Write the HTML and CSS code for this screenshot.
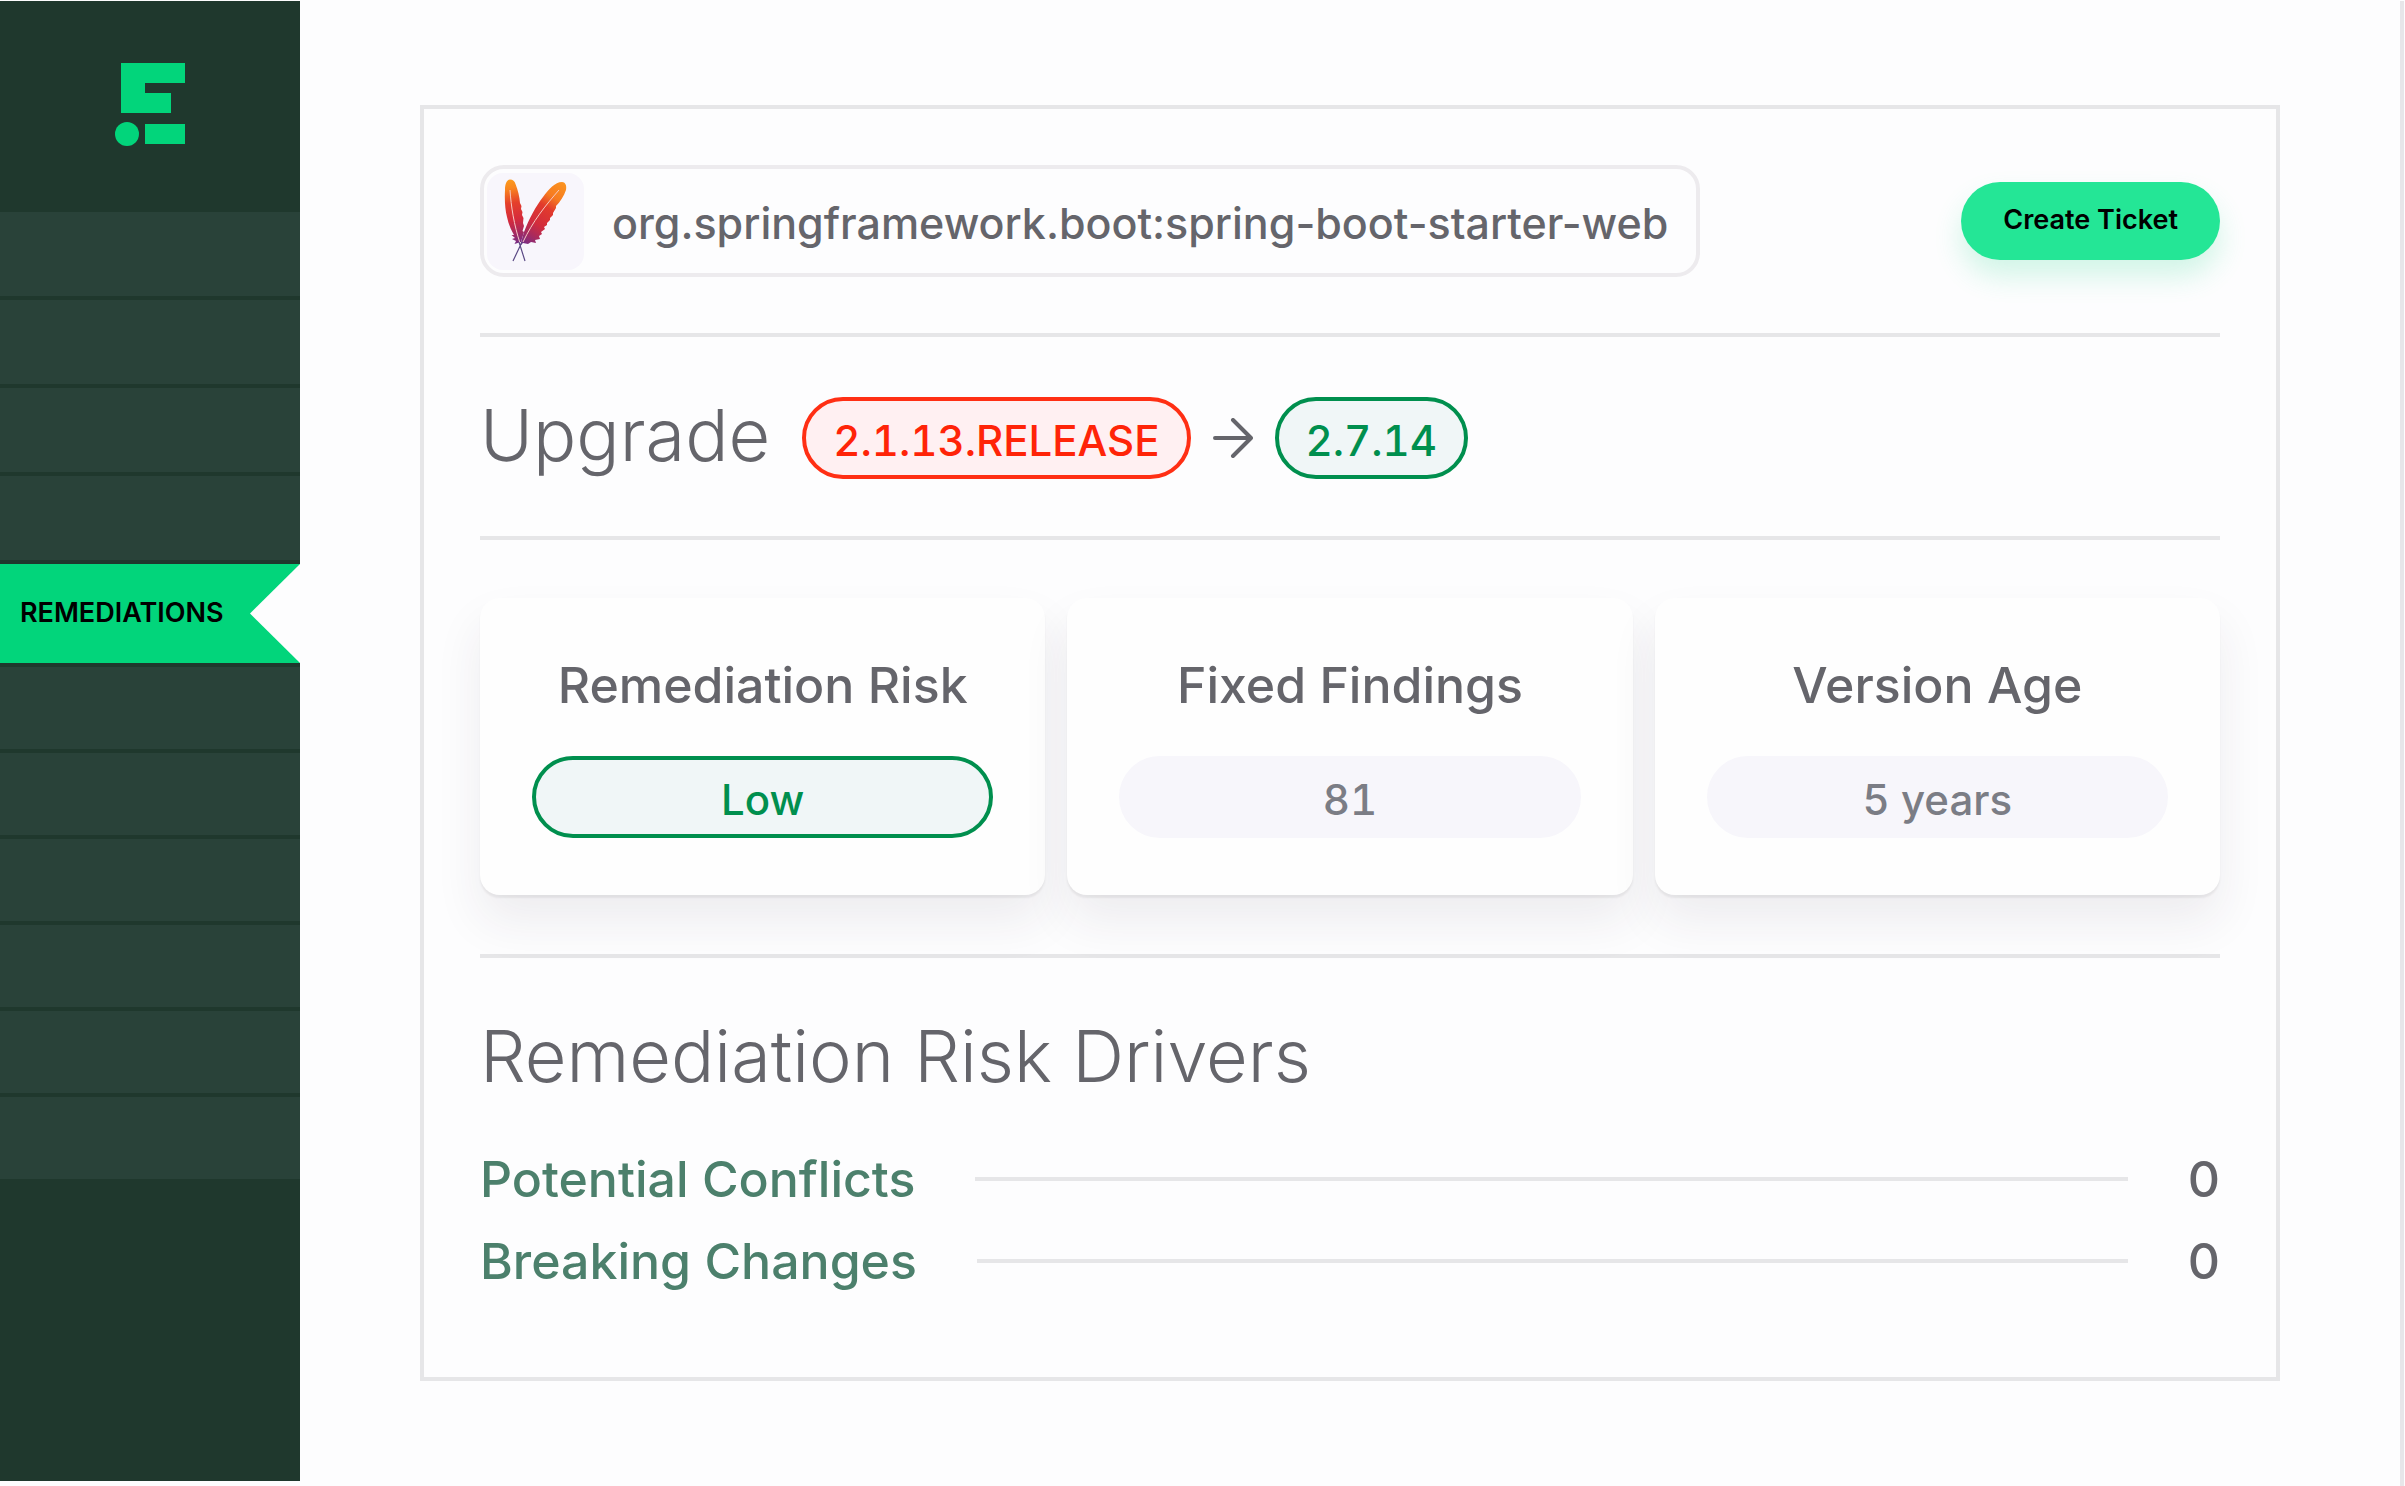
FILE: index.html
```html
<!DOCTYPE html>
<html lang="en">
<head>
  <meta charset="UTF-8">
  <title>Remediations</title>
  <link rel="stylesheet" href="styles.css">
</head>
<body>
  <aside class="sidebar">
    <svg class="logo" viewBox="0 0 70 84" aria-hidden="true">
      <path d="M6 0H70V20H30V30H56V50H6Z"/>
      <circle cx="12" cy="71" r="12"/>
      <path d="M30 61H70V81H30Z"/>
    </svg>
    <ul class="menu">
      <li></li>
      <li></li>
      <li></li>
      <li></li>
      <li class="active"><a href="#">REMEDIATIONS</a></li>
      <li></li>
      <li></li>
      <li></li>
      <li></li>
      <li></li>
      <li></li>
    </ul>
  </aside>
  <main>
    <div class="panel">
      <header class="panel-header">
        <div class="package">
          <svg class="package-icon" viewBox="0 0 97 97" aria-hidden="true">
            <defs>
              <linearGradient id="feather-left" gradientUnits="userSpaceOnUse" x1="22" y1="7" x2="33" y2="72">
                <stop offset="0" stop-color="#fb9a1c"/>
                <stop offset="0.13" stop-color="#f9861f"/>
                <stop offset="0.35" stop-color="#e5402b"/>
                <stop offset="0.6" stop-color="#d62b3b"/>
                <stop offset="0.8" stop-color="#a82a5e"/>
                <stop offset="1" stop-color="#6f2d8c"/>
              </linearGradient>
              <linearGradient id="feather-right" gradientUnits="userSpaceOnUse" x1="76" y1="9" x2="35" y2="72">
                <stop offset="0" stop-color="#fb9420"/>
                <stop offset="0.24" stop-color="#f67a20"/>
                <stop offset="0.4" stop-color="#e23a2c"/>
                <stop offset="0.65" stop-color="#d22c3c"/>
                <stop offset="0.82" stop-color="#a82a5e"/>
                <stop offset="1" stop-color="#6f2d8c"/>
              </linearGradient>
            </defs>
            <path fill="url(#feather-left)" d="M23 6.500C19.500 7 18 11 18 17C17.500 27 18 36 20 44C21.500 51 24 57 27 62L24.500 62L28 65L25 66L29 68L27.500 71L34 69L37 59L35.500 58L37 53L36 50L36.500 45L35 42L35.500 39L34 36L34.500 33L33 30C32.500 24 31 17 28.500 11C27.500 8 26 6.500 23 6.500Z"/>
            <path fill="url(#feather-right)" d="M75 9C68 9 62 16 56 24C49 33 42 46 37 59L33 73L36 70L41 71L44 69L49 70L48 67L53 66L52 63L55 61L54 59L58 56L57 54L60 52L60 50L63 47L63 45L66 42L66 40L69 35L69 33C73 29 77 23 79 17C80 12 78 9 75 9Z"/>
            <path fill="none" stroke="#f6c9c4" stroke-width="1" d="M23 17C24 33 27 52 33 70M72 17C58 33 46 48 36 69"/>
            <path fill="none" stroke="#5b4a85" stroke-width="1.200" d="M26 88L35 69M38 88L32 69"/>
          </svg>
          <span class="package-name">org.springframework.boot:spring-boot-starter-web</span>
        </div>
        <button type="button" class="ticket-btn">Create Ticket</button>
      </header>

      <section class="upgrade">
        <h2>Upgrade</h2>
        <div class="versions">
          <span class="pill pill-red">2.1.13.RELEASE</span>
          <svg class="arrow" viewBox="0 0 40 40" aria-hidden="true">
            <path d="M2 20H37M20 2L38 20L20 38"/>
          </svg>
          <span class="pill pill-green">2.7.14</span>
        </div>
      </section>

      <section class="cards">
        <div class="card">
          <h3>Remediation Risk</h3>
          <span class="pill pill-green">Low</span>
        </div>
        <div class="card">
          <h3>Fixed Findings</h3>
          <span class="pill">81</span>
        </div>
        <div class="card">
          <h3>Version Age</h3>
          <span class="pill">5 years</span>
        </div>
      </section>

      <section class="drivers">
        <h2>Remediation Risk Drivers</h2>
        <div class="driver">
          <a href="#">Potential Conflicts</a>
          <span class="line"></span>
          <span>0</span>
        </div>
        <div class="driver">
          <a href="#">Breaking Changes</a>
          <span class="line"></span>
          <span>0</span>
        </div>
      </section>
    </div>
  </main>
</body>
</html>
```
FILE: styles.css
```css
* {
  box-sizing: border-box;
}

body {
  margin: 0;
  padding: 1px 1px 5px 0;
  min-height: 100vh;
  display: flex;
  font-family: Inter, "Liberation Sans", sans-serif;
  color: #65656b;
  background-color: #fdfdfe;
}

h2,
h3 {
  margin: 0;
}

a {
  text-decoration: none;
}

/* sidebar */
.sidebar {
  width: 300px;
  flex-shrink: 0;
  background-color: #1f382d;
}

.logo {
  display: block;
  width: 70px;
  height: 84px;
  margin: 62px 0 65px 115px;
  fill: #02d57b;
}

.menu {
  list-style: none;
  margin: 0;
  padding: 0;
  display: flex;
  flex-direction: column;
  gap: 4px;
}

.menu li {
  height: 84px;
  background-color: #294239;
}

.menu .active {
  position: relative;
  height: 99px;
  background-color: #02d57b;
}

.menu .active ~ li {
  height: 82px;
}

.menu a {
  display: flex;
  align-items: center;
  height: 96px;
  padding-left: 20px;
  font-size: 27px;
  font-weight: 600;
  color: #000000;
}

/* notch cut into the right end of the active item */
.menu .active::after {
  content: "";
  position: absolute;
  top: 0;
  right: 0;
  width: 50px;
  height: 100%;
  background-color: #fdfdfe;
  clip-path: polygon(100% 0, 100% 100%, 0 50%);
}

/* content */
main {
  flex: 1;
  padding: 104px 120px 100px;
  border-right: 4px solid #e7e6e9;
  margin-bottom: -5px;
}

.panel {
  padding: 56px 56px 86px;
  border: 4px solid #e6e6e8;
}

.panel-header {
  display: flex;
  justify-content: space-between;
  align-items: center;
  padding-bottom: 56px;
  border-bottom: 4px solid #e6e6e8;
}

.package {
  display: flex;
  align-items: center;
  gap: 28px;
  height: 112px;
  padding: 0 28px 0 3px;
  border: 4px solid #edebee;
  border-radius: 24px;
}

.package-icon {
  width: 97px;
  height: 97px;
  border-radius: 16px;
  background-color: #f8f6fc;
}

.package-name {
  padding-top: 4px;
  font-size: 43px;
  font-weight: 500;
}

.ticket-btn {
  height: 78px;
  padding: 0 42px 4px;
  border: none;
  border-radius: 39px;
  font-family: inherit;
  font-size: 27px;
  font-weight: 600;
  color: #000000;
  background-color: #24e696;
  box-shadow: 0 16px 28px rgba(36, 214, 140, 0.2);
  cursor: pointer;
}

.upgrade {
  display: flex;
  align-items: center;
  gap: 32px;
  padding: 60px 0 57px;
  border-bottom: 4px solid #e6e6e8;
}

.panel h2 {
  font-size: 72px;
  line-height: 76px;
  font-weight: 300;
}

.upgrade h2 {
  padding-bottom: 6px;
}

.versions {
  display: flex;
  align-items: center;
  gap: 22px;
}

.pill {
  display: block;
  height: 82px;
  padding: 4px 27px 0;
  border: 4px solid #f7f6fb;
  border-radius: 41px;
  font-size: 42px;
  line-height: 72px;
  font-weight: 500;
  font-variant-numeric: tabular-nums;
  text-align: center;
  color: #7b7d85;
  background-color: #f7f6fb;
}

.pill-red {
  color: #ff2408;
  border-color: #ff2f14;
  background-color: #fff0f2;
}

.pill-green {
  color: #008f4e;
  border-color: #008f4e;
  background-color: #f0f6f7;
}

.arrow {
  width: 40px;
  height: 40px;
  fill: none;
  stroke: #65656b;
  stroke-width: 4;
  stroke-linecap: round;
  stroke-linejoin: round;
}

.cards {
  display: grid;
  grid-template-columns: repeat(3, 1fr);
  gap: 22px;
  padding: 58px 0 59px;
  border-bottom: 4px solid #e6e6e8;
}

.card {
  padding: 57px 52px;
  border-radius: 20px;
  background-color: #fefefe;
  box-shadow: 0 3px 2px rgba(0, 0, 0, 0.06), 0 26px 48px rgba(50, 40, 70, 0.08);
}

.card h3 {
  margin-bottom: 41px;
  font-size: 50px;
  line-height: 60px;
  font-weight: 500;
  text-align: center;
  white-space: nowrap;
}

.drivers {
  display: flex;
  flex-direction: column;
  gap: 22px;
  padding-top: 60px;
}

.drivers h2 {
  margin-bottom: 33px;
}

.driver {
  display: flex;
  align-items: center;
  gap: 60px;
  font-size: 50px;
  line-height: 60px;
  font-weight: 500;
}

.driver a {
  color: #4c806c;
}

.line {
  flex: 1;
  height: 4px;
  background-color: #e6e6e8;
}
```
